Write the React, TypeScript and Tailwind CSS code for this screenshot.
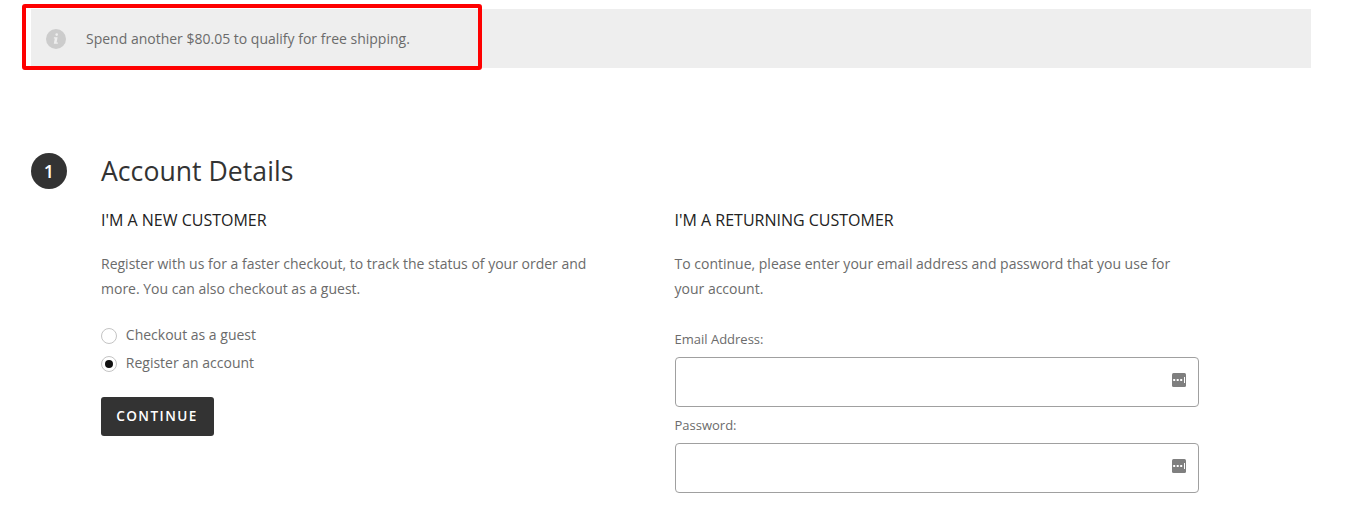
import React from "react";

function Field({ label }: { label: string }) {
  return (
    <label className="block h-[86px]">
      <span className="-ml-[0.5px] block h-[27px] text-[13px] leading-[18px] text-[#6b6b6b]">{label}</span>
      <span className="flex h-[50px] w-[524px] items-center justify-end rounded-[4px] border border-[#a0a0a0] bg-white pr-[12px] pb-[4px]">
        <svg width="14" height="14" viewBox="0 0 14 14">
          <rect width="14" height="14" rx="1.5" fill="#7f7f7f" />
          <path d="M1.2 6h2v2h-2zM4.7 6h2v2h-2zM8.2 6h2v2h-2zM12 4h1v6h-1z" fill="#fff" />
        </svg>
      </span>
    </label>
  );
}

function Radio({ label, checked }: { label: string; checked?: boolean }) {
  return (
    <div className="flex h-7 items-start gap-[9px]">
      <span className="mt-[4px] flex size-4 items-center justify-center rounded-full border border-[#c4c4c4] bg-white">
        {checked && <span className="size-2 rounded-full bg-[#111]" />}
      </span>
      <span className="-ml-[0.2px] leading-[22px]">{label}</span>
    </div>
  );
}

export default function App() {
  return (
    <main className="h-[508px] overflow-hidden bg-white font-['Open_Sans','Noto_Sans',sans-serif] text-[14px] text-[#6b6b6b]">
      <div className="relative ml-[31px] mt-[9px] flex h-[59px] w-[1280px] items-center bg-[#eeeeee] pl-[15px]">
        <svg className="mr-5" width="20" height="20" viewBox="0 0 20 20">
          <circle cx="10" cy="10" r="10" fill="#ccc" />
          <circle cx="10.7" cy="5.6" r="1.3" fill="#eee" />
          <path d="M8 8.2h3.6l-1 5.2h1.4l-.2 1.3H7.8l1-5.2H7.8z" fill="#eee" />
        </svg>
        <span>Spend another $80.05 to qualify for free shipping.</span>
        <div className="absolute left-[-9px] top-[-5px] h-[66px] w-[460px] rounded-[3px] border-4 border-[#fe0000]" />
      </div>
      <section className="ml-[31px] mt-[85px] flex">
        <div className="flex size-9 items-center justify-center rounded-full bg-[#333] text-[18px] font-semibold text-white">1</div>
        <div className="ml-[34px]">
          <h1 className="h-[57px] text-[26.6px] leading-[36px] tracking-[0.03px] text-[#333]">Account Details</h1>
          <div className="flex">
            <div className="w-[574px]">
              <h2 className="h-[41px] text-[16px] leading-[20px] text-[#222]">I'M A NEW CUSTOMER</h2>
              <p className="h-[73px] leading-[25px]">Register with us for a faster checkout, to track the status of your order and<br />more. You can also checkout as a guest.</p>
              <Radio label="Checkout as a guest" />
              <Radio label="Register an account" checked />
              <button className="mt-[17px] h-[39px] w-[113px] rounded-[3px] bg-[#333] pr-[1px] text-[13.6px] font-semibold tracking-[1.45px] text-white">CONTINUE</button>
            </div>
            <div>
              <h2 className="-ml-[0.5px] h-[41px] text-[16px] leading-[20px] text-[#222]">I'M A RETURNING CUSTOMER</h2>
              <p className="-ml-[0.5px] h-[79px] leading-[25px]">To continue, please enter your email address and password that you use for<br />your account.</p>
              <Field label="Email Address:" />
              <Field label="Password:" />
            </div>
          </div>
        </div>
      </section>
    </main>
  );
}
